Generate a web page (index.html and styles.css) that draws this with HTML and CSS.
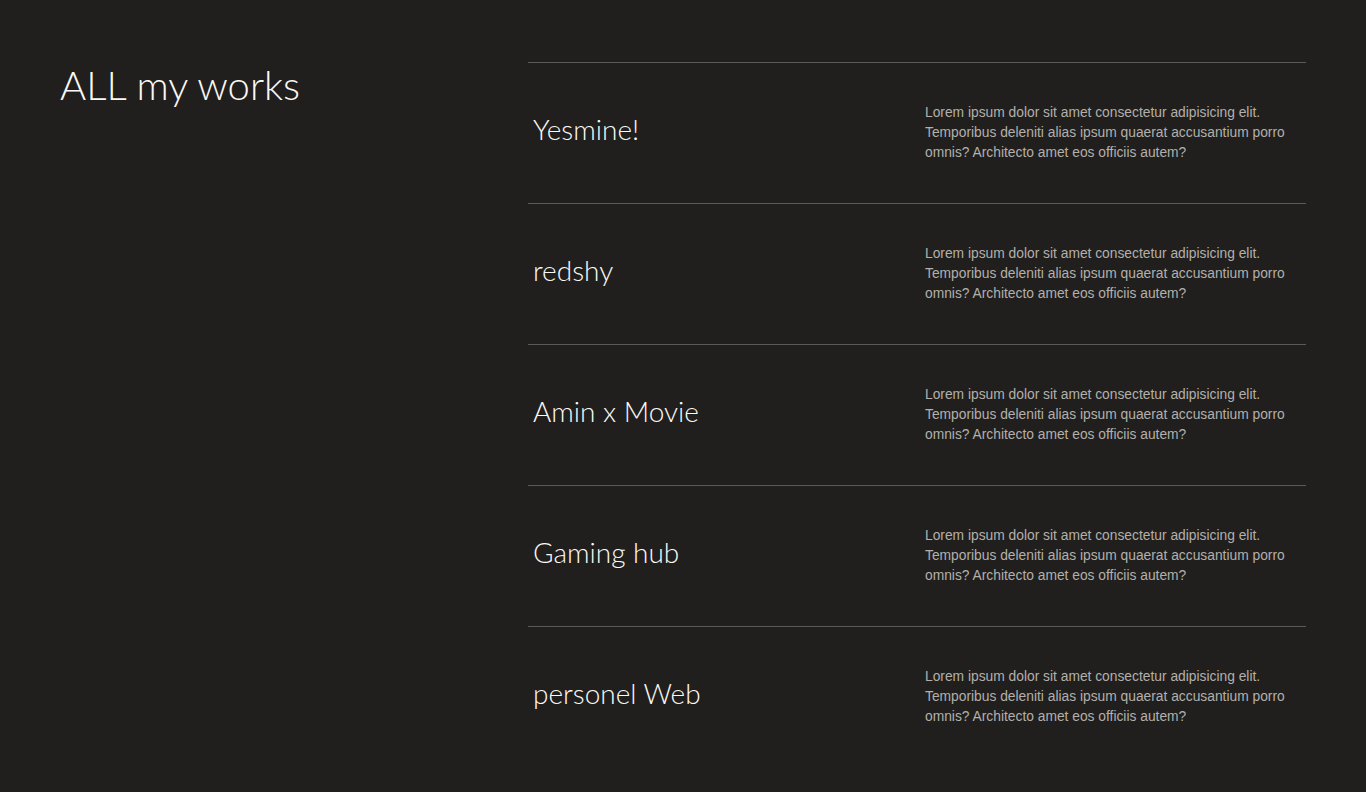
FILE: index.html
```html
<!DOCTYPE html>
<html lang="en">
<head>
<meta charset="utf-8">
<title>ALL my works</title>
<link rel="stylesheet" href="styles.css">
</head>
<body>
<main class="works">
  <h1 class="works-title">ALL my works</h1>
  <ul class="work-list">
    <li class="work">
      <h2 class="work-name">Yesmine!</h2>
      <p class="work-desc">Lorem ipsum dolor sit amet consectetur adipisicing elit. Temporibus deleniti alias ipsum quaerat accusantium porro omnis? Architecto amet eos officiis autem?</p>
    </li>
    <li class="work">
      <h2 class="work-name">redshy</h2>
      <p class="work-desc">Lorem ipsum dolor sit amet consectetur adipisicing elit. Temporibus deleniti alias ipsum quaerat accusantium porro omnis? Architecto amet eos officiis autem?</p>
    </li>
    <li class="work">
      <h2 class="work-name">Amin x Movie</h2>
      <p class="work-desc">Lorem ipsum dolor sit amet consectetur adipisicing elit. Temporibus deleniti alias ipsum quaerat accusantium porro omnis? Architecto amet eos officiis autem?</p>
    </li>
    <li class="work">
      <h2 class="work-name">Gaming hub</h2>
      <p class="work-desc">Lorem ipsum dolor sit amet consectetur adipisicing elit. Temporibus deleniti alias ipsum quaerat accusantium porro omnis? Architecto amet eos officiis autem?</p>
    </li>
    <li class="work">
      <h2 class="work-name">personel Web</h2>
      <p class="work-desc">Lorem ipsum dolor sit amet consectetur adipisicing elit. Temporibus deleniti alias ipsum quaerat accusantium porro omnis? Architecto amet eos officiis autem?</p>
    </li>
  </ul>
</main>
</body>
</html>
```
FILE: styles.css
```css
* { box-sizing: border-box; }
html, body {
  margin: 0;
  padding: 0;
  background: #201f1e;
  height: 100%;
}
body {
  font-family: "Liberation Sans", Arial, sans-serif;
  color: #fbf9f4;
}
.works {
  display: grid;
  grid-template-columns: 468px 778px;
  padding: 62px 60px 25px;
}
.works-title {
  margin: 0;
  font-family: "Lato", sans-serif;
  font-weight: 300;
  font-size: 40px;
  line-height: 46px;
  color: #fbf9f4;
}
.work-list {
  list-style: none;
  margin: 0;
  padding: 0;
}
.work {
  display: grid;
  grid-template-columns: 397px 1fr;
  align-items: center;
  padding: 40px 0;
  border-top: 1px solid #5b5a58;
}
.work-name {
  margin: 0;
  padding: 0 0 8px 5px;
  font-family: "Lato", sans-serif;
  font-weight: 300;
  font-size: 28px;
  line-height: 34px;
  color: #fbf9f4;
}
.work-desc {
  margin: 0;
  max-width: 375px;
  font-size: 13.8px;
  line-height: 20px;
  color: #b3b0ab;
}
```
